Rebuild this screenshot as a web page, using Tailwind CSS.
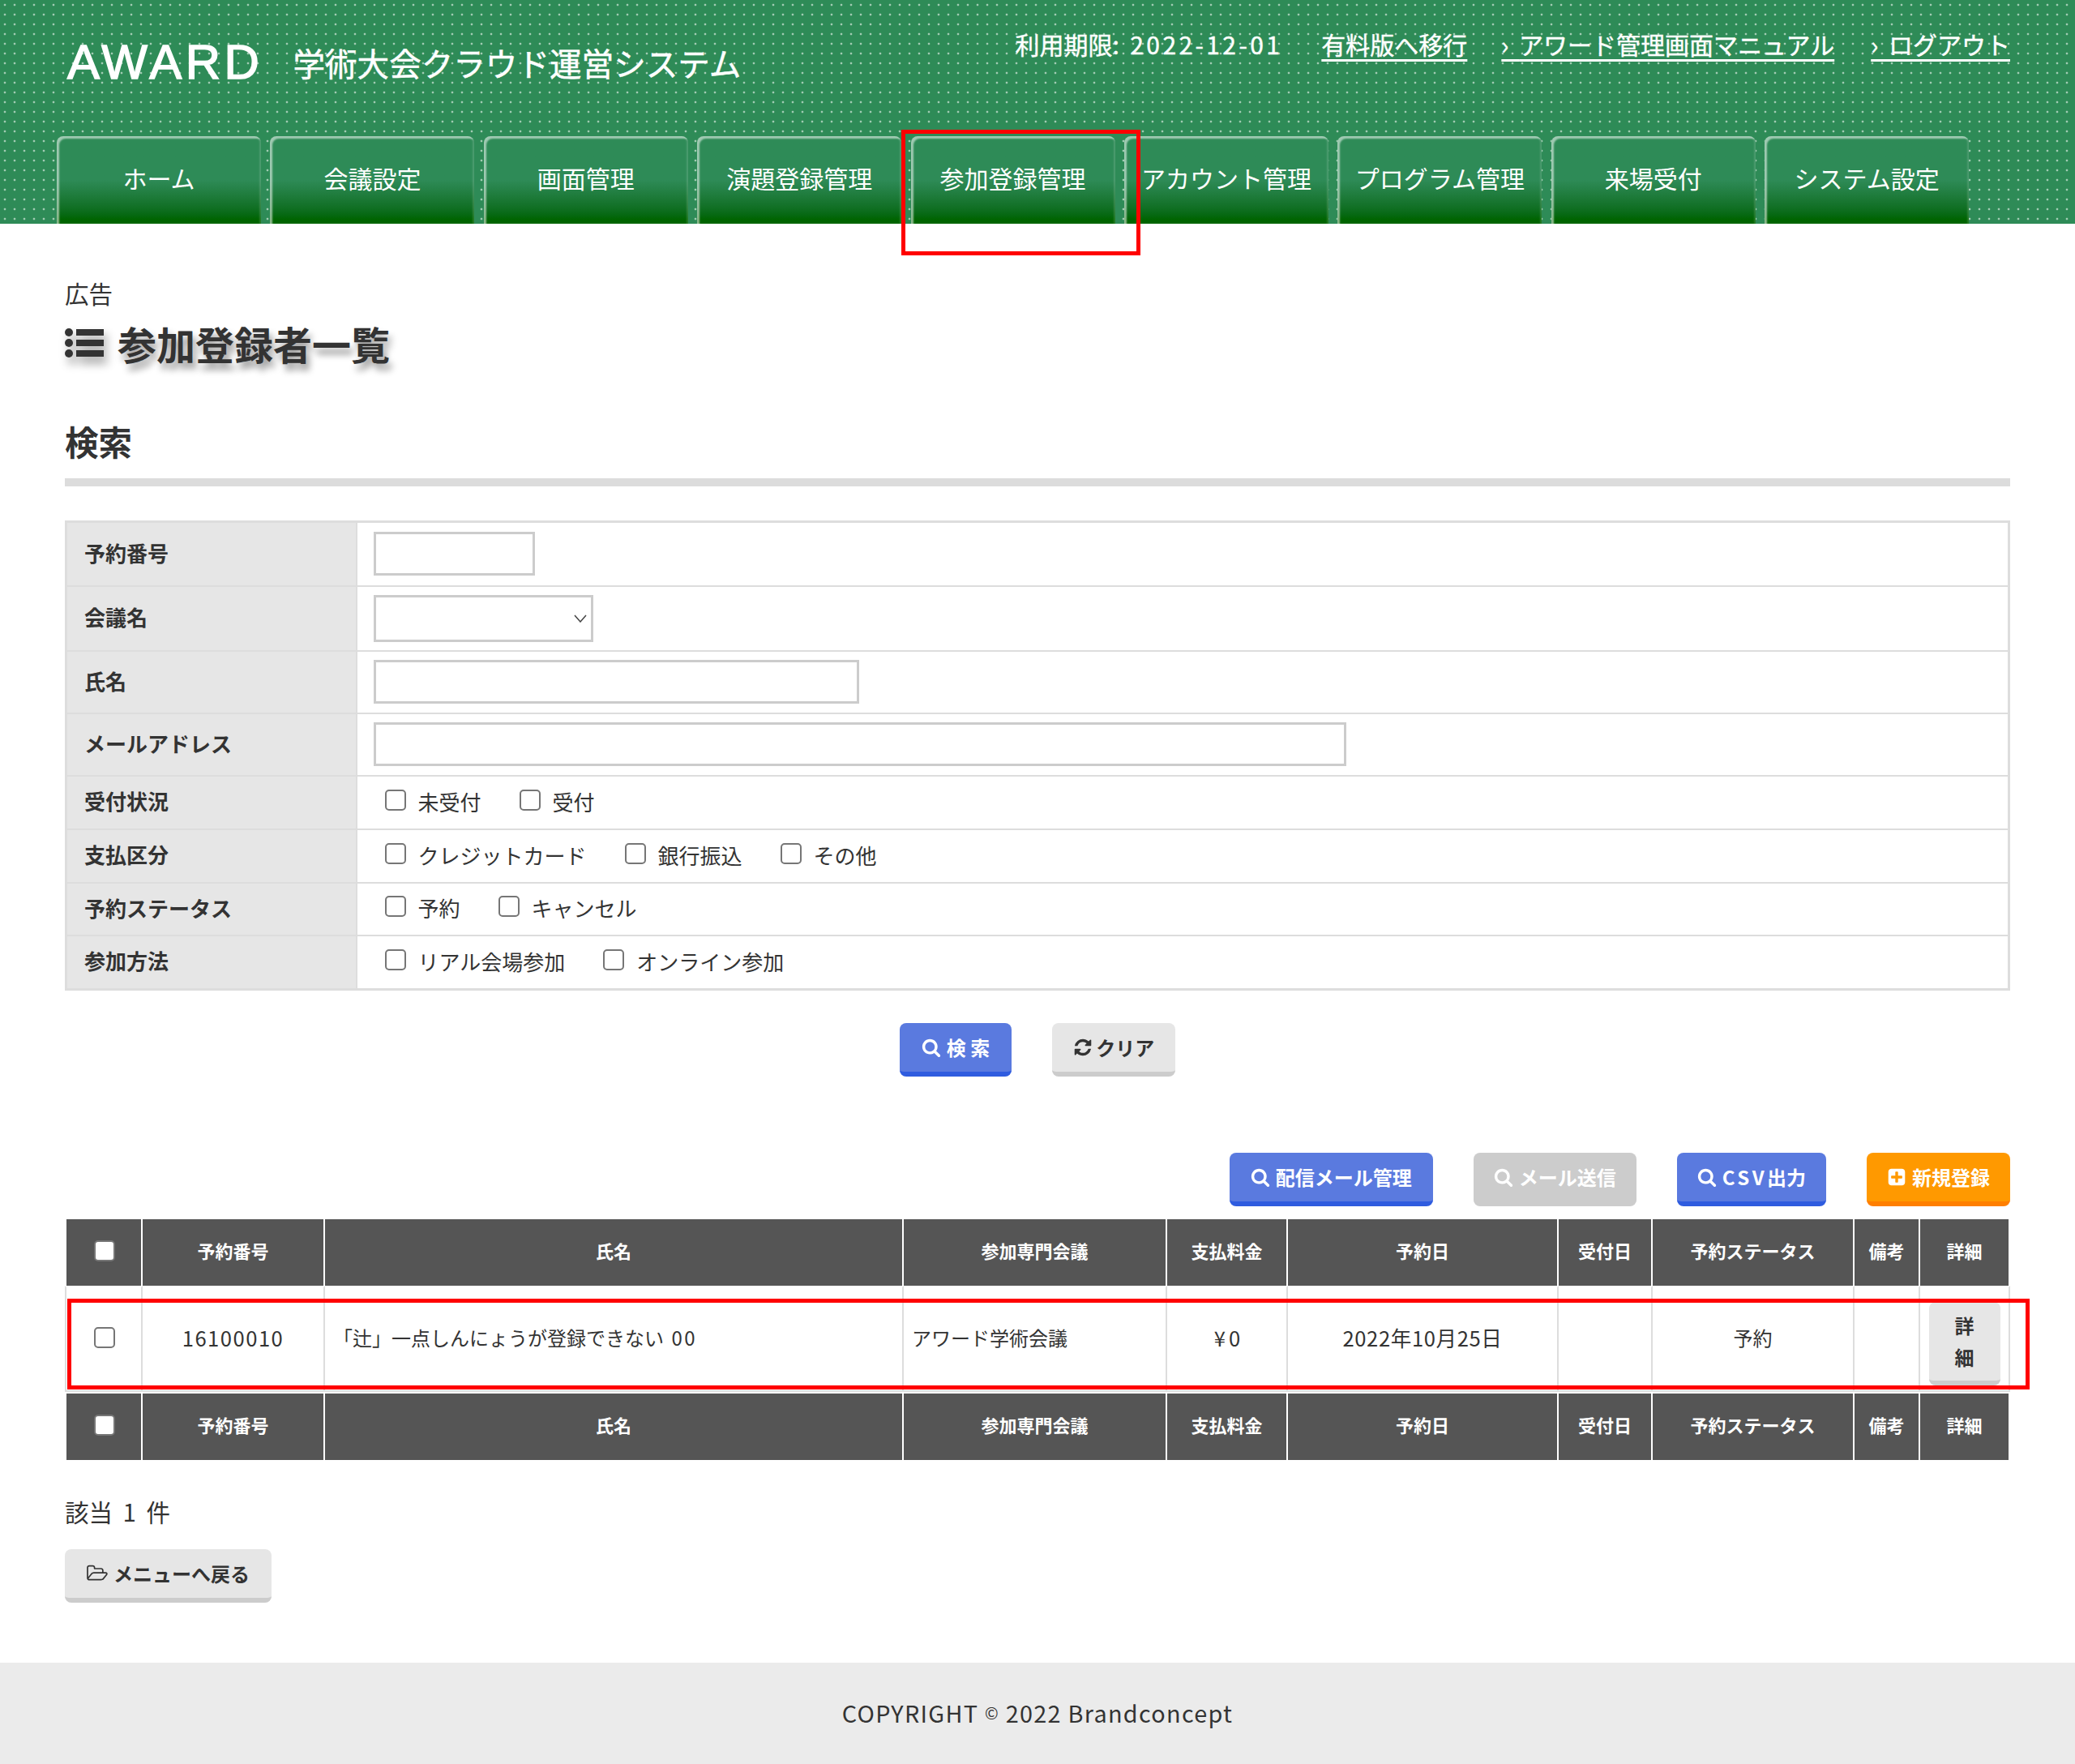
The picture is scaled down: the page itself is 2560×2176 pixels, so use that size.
<!DOCTYPE html>
<html lang="ja">
  <head>
    <meta charset="UTF-8" />
    <meta name="viewport" content="width=device-width, initial-scale=1.0" />
    <title>参加登録者一覧</title>
    <script src="https://cdn.jsdelivr.net/npm/@tailwindcss/browser@4"></script>
  </head>
  <body class="bg-white text-[#333] font-['Noto_Sans_CJK_JP','Noto_Sans',sans-serif]">
    <!-- header -->
    <header class="relative h-[276px] flex flex-col bg-[#2e8b57] bg-[radial-gradient(circle,rgba(255,255,255,0.55)_1.1px,transparent_1.7px)] bg-[length:12px_12px]">
      <div class="h-[168px] flex justify-between items-start pl-[83px] pr-[80px] text-white">
        <div class="flex items-center gap-[37px] pt-[40px]">
          <span class="font-['Liberation_Sans',sans-serif] text-[60px] leading-[72px] tracking-[4.5px] [-webkit-text-stroke:1.5px_white]">AWARD</span>
          <span class="text-[39.6px] leading-[72px] mt-[1px] [-webkit-text-stroke:0.5px_white]">学術大会クラウド運営システム</span>
        </div>
        <div class="flex items-center gap-[45px] pt-[30px] text-[30px] leading-[48px] [-webkit-text-stroke:0.4px_white]">
          <span class="mr-[3px]">利用期限<span class="tracking-[3.4px]">: 2022-12-01</span></span>
          <a href="#" class="-mr-[3px] underline decoration-[3px] underline-offset-[6px]">有料版へ移行</a>
          <a href="#" class="underline decoration-[3px] underline-offset-[6px]"><span class="tracking-[3px]">› </span>アワード管理画面マニュアル</a>
          <a href="#" class="underline decoration-[3px] underline-offset-[6px]"><span class="tracking-[3px]">› </span>ログアウト</a>
        </div>
      </div>
      <nav class="flex gap-[11.4px] pl-[70px] h-[108px]">
        <a href="#" class="w-[252px] flex items-center justify-center pb-[5px] rounded-t-[8px] text-white text-[30px] bg-linear-to-b from-[#2e8b57] from-50% to-[#006400] to-95% shadow-[inset_3px_3px_2px_rgba(255,255,255,0.55),inset_-2px_0_2px_rgba(255,255,255,0.15)]">ホーム</a>
        <a href="#" class="w-[252px] flex items-center justify-center pb-[5px] rounded-t-[8px] text-white text-[30px] bg-linear-to-b from-[#2e8b57] from-50% to-[#006400] to-95% shadow-[inset_3px_3px_2px_rgba(255,255,255,0.55),inset_-2px_0_2px_rgba(255,255,255,0.15)]">会議設定</a>
        <a href="#" class="w-[252px] flex items-center justify-center pb-[5px] rounded-t-[8px] text-white text-[30px] bg-linear-to-b from-[#2e8b57] from-50% to-[#006400] to-95% shadow-[inset_3px_3px_2px_rgba(255,255,255,0.55),inset_-2px_0_2px_rgba(255,255,255,0.15)]">画面管理</a>
        <a href="#" class="w-[252px] flex items-center justify-center pb-[5px] rounded-t-[8px] text-white text-[30px] bg-linear-to-b from-[#2e8b57] from-50% to-[#006400] to-95% shadow-[inset_3px_3px_2px_rgba(255,255,255,0.55),inset_-2px_0_2px_rgba(255,255,255,0.15)]">演題登録管理</a>
        <a href="#" class="w-[252px] flex items-center justify-center pb-[5px] rounded-t-[8px] text-white text-[30px] bg-linear-to-b from-[#2e8b57] from-50% to-[#006400] to-95% shadow-[inset_3px_3px_2px_rgba(255,255,255,0.55),inset_-2px_0_2px_rgba(255,255,255,0.15)]">参加登録管理</a>
        <a href="#" class="w-[252px] flex items-center justify-center pb-[5px] rounded-t-[8px] text-white text-[30px] whitespace-nowrap bg-linear-to-b from-[#2e8b57] from-50% to-[#006400] to-95% shadow-[inset_3px_3px_2px_rgba(255,255,255,0.55),inset_-2px_0_2px_rgba(255,255,255,0.15)]">アカウント管理</a>
        <a href="#" class="w-[252px] flex items-center justify-center pb-[5px] rounded-t-[8px] text-white text-[30px] whitespace-nowrap bg-linear-to-b from-[#2e8b57] from-50% to-[#006400] to-95% shadow-[inset_3px_3px_2px_rgba(255,255,255,0.55),inset_-2px_0_2px_rgba(255,255,255,0.15)]">プログラム管理</a>
        <a href="#" class="w-[252px] flex items-center justify-center pb-[5px] rounded-t-[8px] text-white text-[30px] bg-linear-to-b from-[#2e8b57] from-50% to-[#006400] to-95% shadow-[inset_3px_3px_2px_rgba(255,255,255,0.55),inset_-2px_0_2px_rgba(255,255,255,0.15)]">来場受付</a>
        <a href="#" class="w-[252px] flex items-center justify-center pb-[5px] rounded-t-[8px] text-white text-[30px] bg-linear-to-b from-[#2e8b57] from-50% to-[#006400] to-95% shadow-[inset_3px_3px_2px_rgba(255,255,255,0.55),inset_-2px_0_2px_rgba(255,255,255,0.15)]">システム設定</a>
      </nav>
      <!-- annotation round the active tab -->
      <div class="absolute left-[1112px] top-[160px] w-[295px] h-[155px] border-[5px] border-[#ff0000]"></div>
    </header>

    <main class="px-[80px]">
      <p class="pt-[62px] text-[29.5px] leading-[46px]">広告</p>
      <h1 class="mt-[7px] h-[64px] flex items-center gap-[17px] text-[48px] font-bold [text-shadow:4px_8px_8px_rgba(0,0,0,0.4)]">
        <svg viewBox="0 0 48 38" class="w-[48px] h-[38px] fill-[#333] [filter:drop-shadow(4px_8px_6px_rgba(0,0,0,0.4))]">
          <circle cx="5" cy="6" r="5" /><circle cx="5" cy="19" r="5" /><circle cx="5" cy="32" r="5" />
          <rect x="14" y="2" width="34" height="8" /><rect x="14" y="15" width="34" height="8" /><rect x="14" y="28" width="34" height="8" />
        </svg>
        参加登録者一覧
      </h1>

      <h2 class="mt-[59px] text-[41.6px] leading-[60px] font-bold">検索</h2>
      <div class="mt-[16px] h-[10px] bg-[#dcdcdc]"></div>

      <!-- search form -->
      <table class="mt-[42px] w-full border-collapse border-[3px] border-[#ddd] text-[26px]">
        <tbody>
          <tr class="h-[79px] border-b-2 border-[#ddd]">
            <th class="w-[358px] bg-[#e6e6e6] border-r-2 border-[#ddd] pl-[21px] pb-[4px] text-left font-bold">予約番号</th>
            <td class="pl-[20px]"><input type="text" class="block w-[199px] h-[54px] border-[3px] border-[#ccc]" /></td>
          </tr>
          <tr class="h-[80px] border-b-2 border-[#ddd]">
            <th class="bg-[#e6e6e6] border-r-2 border-[#ddd] pl-[21px] pb-[4px] text-left font-bold">会議名</th>
            <td class="pl-[20px]">
              <div class="relative w-[271px] h-[58px]">
                <select class="block appearance-none w-full h-full border-[3px] border-[#ccc] bg-white"></select>
                <svg viewBox="0 0 16 10" class="absolute right-[8px] top-[24px] w-[16px] h-[10px] fill-none stroke-[#444] stroke-[1.5]"><path d="M1 1l7 8 7-8" /></svg>
              </div>
            </td>
          </tr>
          <tr class="h-[77px] border-b-2 border-[#ddd]">
            <th class="bg-[#e6e6e6] border-r-2 border-[#ddd] pl-[21px] pb-[4px] text-left font-bold">氏名</th>
            <td class="pl-[20px]"><input type="text" class="block w-[599px] h-[54px] border-[3px] border-[#ccc]" /></td>
          </tr>
          <tr class="h-[77px] border-b-2 border-[#ddd]">
            <th class="bg-[#e6e6e6] border-r-2 border-[#ddd] pl-[21px] pb-[4px] text-left font-bold">メールアドレス</th>
            <td class="pl-[20px]"><input type="text" class="block w-[1200px] h-[54px] border-[3px] border-[#ccc]" /></td>
          </tr>
          <tr class="h-[66px] border-b-2 border-[#ddd]">
            <th class="bg-[#e6e6e6] border-r-2 border-[#ddd] pl-[21px] pb-[4px] text-left font-bold">受付状況</th>
            <td class="pl-[34px] pb-[3px]">
              <div class="flex gap-[47px]">
                <label class="flex items-center gap-[15px]"><input type="checkbox" class="appearance-none w-[26px] h-[26px] border-2 border-[#767676] rounded-[5px] bg-white -mt-[3px]" />未受付</label>
                <label class="flex items-center gap-[15px]"><input type="checkbox" class="appearance-none w-[26px] h-[26px] border-2 border-[#767676] rounded-[5px] bg-white -mt-[3px]" />受付</label>
              </div>
            </td>
          </tr>
          <tr class="h-[66px] border-b-2 border-[#ddd]">
            <th class="bg-[#e6e6e6] border-r-2 border-[#ddd] pl-[21px] pb-[4px] text-left font-bold">支払区分</th>
            <td class="pl-[34px] pb-[3px]">
              <div class="flex gap-[47px]">
                <label class="flex items-center gap-[15px]"><input type="checkbox" class="appearance-none w-[26px] h-[26px] border-2 border-[#767676] rounded-[5px] bg-white -mt-[3px]" />クレジットカード</label>
                <label class="flex items-center gap-[15px]"><input type="checkbox" class="appearance-none w-[26px] h-[26px] border-2 border-[#767676] rounded-[5px] bg-white -mt-[3px]" />銀行振込</label>
                <label class="flex items-center gap-[15px]"><input type="checkbox" class="appearance-none w-[26px] h-[26px] border-2 border-[#767676] rounded-[5px] bg-white -mt-[3px]" />その他</label>
              </div>
            </td>
          </tr>
          <tr class="h-[65px] border-b-2 border-[#ddd]">
            <th class="bg-[#e6e6e6] border-r-2 border-[#ddd] pl-[21px] pb-[4px] text-left font-bold">予約ステータス</th>
            <td class="pl-[34px] pb-[3px]">
              <div class="flex gap-[47px]">
                <label class="flex items-center gap-[15px]"><input type="checkbox" class="appearance-none w-[26px] h-[26px] border-2 border-[#767676] rounded-[5px] bg-white -mt-[3px]" />予約</label>
                <label class="flex items-center gap-[15px]"><input type="checkbox" class="appearance-none w-[26px] h-[26px] border-2 border-[#767676] rounded-[5px] bg-white -mt-[3px]" />キャンセル</label>
              </div>
            </td>
          </tr>
          <tr class="h-[67px]">
            <th class="bg-[#e6e6e6] border-r-2 border-[#ddd] pl-[21px] pb-[4px] text-left font-bold">参加方法</th>
            <td class="pl-[34px] pb-[3px]">
              <div class="flex gap-[47px]">
                <label class="flex items-center gap-[15px]"><input type="checkbox" class="appearance-none w-[26px] h-[26px] border-2 border-[#767676] rounded-[5px] bg-white -mt-[3px]" />リアル会場参加</label>
                <label class="flex items-center gap-[15px]"><input type="checkbox" class="appearance-none w-[26px] h-[26px] border-2 border-[#767676] rounded-[5px] bg-white -mt-[3px]" />オンライン参加</label>
              </div>
            </td>
          </tr>
        </tbody>
      </table>

      <div class="mt-[40px] flex justify-center gap-[50px] text-[24px] font-bold">
        <button class="h-[66px] px-[27px] flex items-center gap-[7px] rounded-[8px] border-b-[6px] border-[#2f5cdf] bg-[#5a7adf] text-white">
          <svg viewBox="0 0 1792 1792" class="w-[24px] h-[24px] fill-white"><path d="M1216 832q0-185-131.500-316.500t-316.500-131.500-316.500 131.500-131.500 316.500 131.500 316.500 316.500 131.500 316.500-131.500 131.500-316.500zm512 832q0 52-38 90t-90 38q-54 0-90-38l-343-342q-179 124-399 124-143 0-273.500-55.500t-225-150-150-225-55.500-273.500 55.500-273.500 150-225 225-150 273.500-55.500 273.500 55.500 225 150 150 225 55.500 273.500q0 220-124 399l343 343q37 37 37 90z" /></svg>
          検 索
        </button>
        <button class="h-[66px] px-[26px] flex items-center gap-[4px] rounded-[8px] border-b-[6px] border-[#ccc] bg-[#e6e6e6] text-[#333]">
          <svg viewBox="0 0 1792 1792" class="w-[24px] h-[24px] fill-[#333]"><path d="M1639 1056q0 5-1 7-64 268-268 434.500t-478 166.500q-146 0-282.500-55t-243.500-157l-129 129q-19 19-45 19t-45-19-19-45v-448q0-26 19-45t45-19h448q26 0 45 19t19 45-19 45l-137 137q71 66 161 102t187 36q134 0 250-65t186-179q11-17 53-117 8-23 30-23h192q13 0 22.500 9.500t9.500 22.500zm25-800v448q0 26-19 45t-45 19h-448q-26 0-45-19t-19-45 19-45l138-138q-148-137-349-137-134 0-250 65t-186 179q-11 17-53 117-8 23-30 23h-199q-13 0-22.500-9.500t-9.500-22.500v-7q65-268 270-434.500t480-166.500q146 0 284 55.500t245 156.500l130-129q19-19 45-19t45 19 19 45z" /></svg>
          クリア
        </button>
      </div>

      <div class="mt-[94px] flex justify-end gap-[50px] text-[24px] font-bold text-white">
        <button class="h-[66px] px-[26px] flex items-center gap-[7px] rounded-[8px] border-b-[6px] border-[#2f5cdf] bg-[#5a7adf]">
          <svg viewBox="0 0 1792 1792" class="w-[24px] h-[24px] fill-white"><path d="M1216 832q0-185-131.500-316.500t-316.500-131.500-316.500 131.500-131.500 316.500 131.500 316.500 316.500 131.500 316.500-131.500 131.500-316.500zm512 832q0 52-38 90t-90 38q-54 0-90-38l-343-342q-179 124-399 124-143 0-273.500-55.500t-225-150-150-225-55.500-273.500 55.500-273.500 150-225 225-150 273.500-55.500 273.500 55.500 225 150 150 225 55.500 273.500q0 220-124 399l343 343q37 37 37 90z" /></svg>
          配信メール管理
        </button>
        <button class="h-[66px] px-[25px] flex items-center gap-[7px] rounded-[8px] border-b-[6px] border-[#ccc] bg-[#ccc]">
          <svg viewBox="0 0 1792 1792" class="w-[24px] h-[24px] fill-white"><path d="M1216 832q0-185-131.500-316.500t-316.500-131.500-316.500 131.500-131.500 316.500 131.500 316.500 316.500 131.500 316.500-131.500 131.500-316.500zm512 832q0 52-38 90t-90 38q-54 0-90-38l-343-342q-179 124-399 124-143 0-273.500-55.500t-225-150-150-225-55.500-273.500 55.500-273.500 150-225 225-150 273.500-55.500 273.500 55.500 225 150 150 225 55.500 273.500q0 220-124 399l343 343q37 37 37 90z" /></svg>
          メール送信
        </button>
        <button class="h-[66px] px-[25px] flex items-center gap-[7px] rounded-[8px] border-b-[6px] border-[#2f5cdf] bg-[#5a7adf]">
          <svg viewBox="0 0 1792 1792" class="w-[24px] h-[24px] fill-white"><path d="M1216 832q0-185-131.500-316.500t-316.500-131.500-316.500 131.500-131.500 316.500 131.500 316.500 316.500 131.500 316.500-131.500 131.500-316.500zm512 832q0 52-38 90t-90 38q-54 0-90-38l-343-342q-179 124-399 124-143 0-273.500-55.500t-225-150-150-225-55.500-273.500 55.500-273.500 150-225 225-150 273.500-55.500 273.500 55.500 225 150 150 225 55.500 273.500q0 220-124 399l343 343q37 37 37 90z" /></svg>
          <span><span class="tracking-[3.5px]">CSV</span>出力</span>
        </button>
        <button class="h-[66px] px-[25px] flex items-center gap-[7px] rounded-[8px] border-b-[6px] border-[#ff7f00] bg-[#ff9900]">
          <svg viewBox="0 0 1792 1792" class="w-[24px] h-[24px] fill-white"><path d="M1408 960v-128q0-26-19-45t-45-19h-320v-320q0-26-19-45t-45-19h-128q-26 0-45 19t-19 45v320h-320q-26 0-45 19t-19 45v128q0 26 19 45t45 19h320v320q0 26 19 45t45 19h128q26 0 45-19t19-45v-320h320q26 0 45-19t19-45zm256-544v960q0 119-84.500 203.500t-203.500 84.500h-960q-119 0-203.500-84.500t-84.500-203.500v-960q0-119 84.500-203.500t203.500-84.500h960q119 0 203.500 84.500t84.500 203.500z" /></svg>
          新規登録
        </button>
      </div>

      <!-- results -->
      <div class="relative mt-[16px]">
        <table class="w-full table-fixed border-separate border-spacing-0 text-[24px]">
          <thead>
            <tr class="h-[82px] bg-[#555] text-white text-[22px]">
              <th class="w-[96px] pb-[4px] bg-[#555] border-x-2 border-white"><input type="checkbox" class="block ml-[34px] appearance-none w-[26px] h-[26px] border-2 border-[#767676] rounded-[5px] bg-white" /></th>
              <th class="w-[225px] pb-[6px] border-r-2 border-white font-bold">予約番号</th>
              <th class="w-[714px] pb-[6px] border-r-2 border-white font-bold">氏名</th>
              <th class="w-[325px] pb-[6px] border-r-2 border-white font-bold">参加専門会議</th>
              <th class="w-[149px] pb-[6px] border-r-2 border-white font-bold">支払料金</th>
              <th class="w-[334px] pb-[6px] border-r-2 border-white font-bold">予約日</th>
              <th class="w-[116px] pb-[6px] border-r-2 border-white font-bold">受付日</th>
              <th class="w-[249px] pb-[6px] border-r-2 border-white font-bold">予約ステータス</th>
              <th class="w-[81px] pb-[6px] border-r-2 border-white font-bold">備考</th>
              <th class="w-[111px] pb-[6px] border-r-2 border-white font-bold">詳細</th>
            </tr>
          </thead>
          <tbody>
            <tr class="h-[131px]">
              <td class="pb-[4px] border-2 border-[#ddd] border-t-white"><input type="checkbox" class="block ml-[34px] appearance-none w-[26px] h-[26px] border-2 border-[#767676] rounded-[5px] bg-white" /></td>
              <td class="pb-[3px] border-r-2 border-y-2 border-[#ddd] border-t-white text-center text-[25.6px] tracking-[1.5px]">16100010</td>
              <td class="pb-[3px] border-r-2 border-y-2 border-[#ddd] border-t-white pl-[10px]">「辻」一点しんにょうが登録できない <span class="ml-[4px] tracking-[2.5px]">00</span></td>
              <td class="pb-[3px] border-r-2 border-y-2 border-[#ddd] border-t-white pl-[10px]">アワード学術会議</td>
              <td class="pb-[3px] pl-[5px] border-r-2 border-y-2 border-[#ddd] border-t-white text-center text-[25.6px] tracking-[4px]">¥0</td>
              <td class="pb-[3px] border-r-2 border-y-2 border-[#ddd] border-t-white text-center text-[25.6px] tracking-[0.6px]">2022年10月25日</td>
              <td class="border-r-2 border-y-2 border-[#ddd] border-t-white"></td>
              <td class="pb-[3px] border-r-2 border-y-2 border-[#ddd] border-t-white text-center">予約</td>
              <td class="border-r-2 border-y-2 border-[#ddd] border-t-white"></td>
              <td class="border-r-2 border-y-2 border-[#ddd] border-t-white">
                <button class="block mx-auto mt-[12px] w-[88px] px-[25px] py-[10px] leading-[38.4px] rounded-[8px] border-b-[6px] border-[#ccc] bg-[#e6e6e6] font-bold text-[#333]">詳細</button>
              </td>
            </tr>
          </tbody>
          <tfoot>
            <tr class="h-[84px] text-white text-[22px]">
              <th class="pb-[4px] bg-[#555] border-x-2 border-t-2 border-white"><input type="checkbox" class="block ml-[34px] appearance-none w-[26px] h-[26px] border-2 border-[#767676] rounded-[5px] bg-white" /></th>
              <th class="pb-[6px] bg-[#555] border-r-2 border-t-2 border-white font-bold">予約番号</th>
              <th class="pb-[6px] bg-[#555] border-r-2 border-t-2 border-white font-bold">氏名</th>
              <th class="pb-[6px] bg-[#555] border-r-2 border-t-2 border-white font-bold">参加専門会議</th>
              <th class="pb-[6px] bg-[#555] border-r-2 border-t-2 border-white font-bold">支払料金</th>
              <th class="pb-[6px] bg-[#555] border-r-2 border-t-2 border-white font-bold">予約日</th>
              <th class="pb-[6px] bg-[#555] border-r-2 border-t-2 border-white font-bold">受付日</th>
              <th class="pb-[6px] bg-[#555] border-r-2 border-t-2 border-white font-bold">予約ステータス</th>
              <th class="pb-[6px] bg-[#555] border-r-2 border-t-2 border-white font-bold">備考</th>
              <th class="pb-[6px] bg-[#555] border-r-2 border-t-2 border-white font-bold">詳細</th>
            </tr>
          </tfoot>
        </table>
        <!-- annotation round the result row -->
        <div class="absolute left-[3px] top-[98px] w-[2421px] h-[112px] border-[5px] border-[#ff0000]"></div>
      </div>

      <p class="mt-[40px] text-[29.5px] leading-[46px] [word-spacing:6px]">該当 1 件</p>
      <button class="mt-[24px] h-[66px] px-[27px] flex items-center gap-[7px] rounded-[8px] border-b-[6px] border-[#ccc] bg-[#e6e6e6] text-[24px] font-bold text-[#333]">
        <svg viewBox="0 0 1920 1792" class="w-[26px] h-[24px] fill-[#333]"><path d="M1781 931q0-35-53-35h-1088q-40 0-85.500 21.500t-71.500 52.500l-294 363q-18 24-18 40 0 35 53 35h1088q40 0 86-22t71-53l294-363q18-22 18-39zm-1141-163h768v-160q0-40-28-68t-68-28h-576q-40 0-68-28t-28-68v-64q0-40-28-68t-68-28h-320q-40 0-68 28t-28 68v853l256-315q44-53 116-87.500t140-34.500zm1269 163q0 62-46 120l-295 363q-43 53-116 87.500t-140 34.500h-1088q-92 0-158-66t-66-158v-960q0-92 66-158t158-66h320q92 0 158 66t66 158v32h544q92 0 158 66t66 158v160h192q54 0 99 24.500t67 70.500q15 32 15 68z" /></svg>
        メニューへ戻る
      </button>
    </main>

    <footer class="mt-[74px] h-[125px] pb-[2px] flex items-center justify-center bg-[#ebebeb] text-[28.8px] tracking-[1.3px]">COPYRIGHT&nbsp;<span class="text-[20px]">©</span>&nbsp;2022 Brandconcept</footer>
  </body>
</html>
